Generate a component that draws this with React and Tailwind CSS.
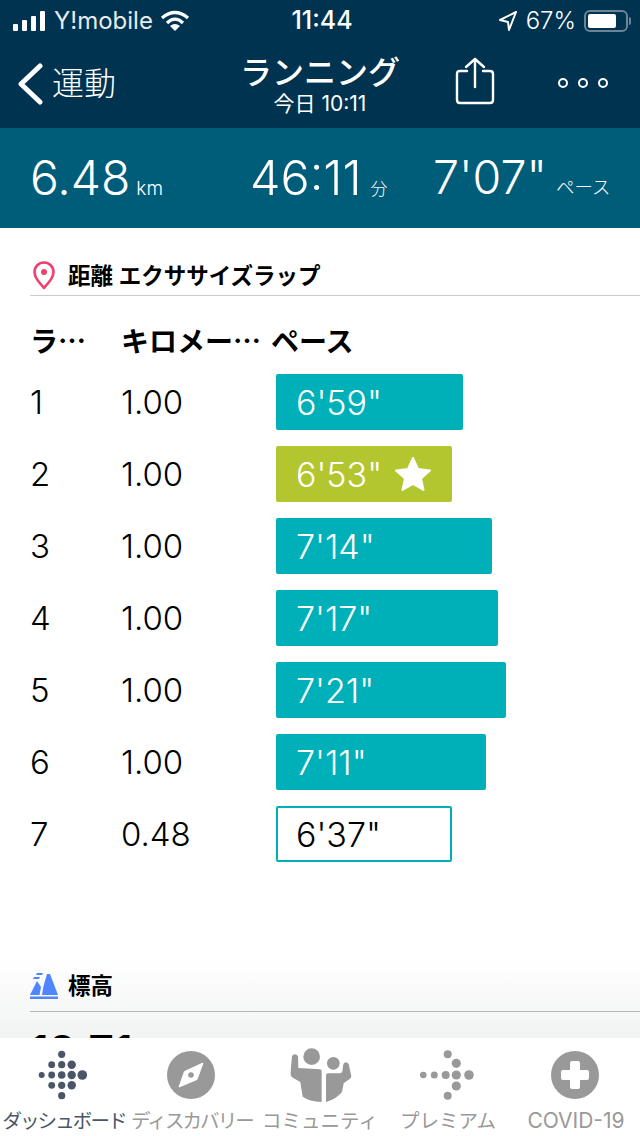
const laps = [
  { lap: '1', km: '1.00', pace: `6'59"`, bar: 'w-[187px] bg-[#00b0b9] text-white pl-[20px]' },
  { lap: '2', km: '1.00', pace: `6'53"`, bar: 'w-[176px] bg-[#b4c62f] text-white pl-[20px]', best: true },
  { lap: '3', km: '1.00', pace: `7'14"`, bar: 'w-[216px] bg-[#00b0b9] text-white pl-[20px]' },
  { lap: '4', km: '1.00', pace: `7'17"`, bar: 'w-[222px] bg-[#00b0b9] text-white pl-[20px]' },
  { lap: '5', km: '1.00', pace: `7'21"`, bar: 'w-[230px] bg-[#00b0b9] text-white pl-[20px]' },
  { lap: '6', km: '1.00', pace: `7'11"`, bar: 'w-[210px] bg-[#00b0b9] text-white pl-[20px]' },
  { lap: '7', km: '0.48', pace: `6'37"`, bar: 'w-[176px] border-2 border-[#00b0b9] text-black pl-[18px]' },
];

function Dots({ dots, fill }) {
  return (
    <svg width="60" height="56" viewBox="0 0 60 56" fill={fill}>
      {dots.map(([x, y, r]) => (
        <circle key={`${x}-${y}`} cx={x} cy={y} r={r} />
      ))}
    </svg>
  );
}

const dashDots = [
  [27.7, 7.3, 3.6], [17.7, 17.7, 3.4], [27.7, 17.7, 3.6], [37.7, 17.7, 4.2],
  [7.7, 28, 3], [17.7, 28, 3.4], [27.7, 28, 3.8], [37.7, 28, 4.2], [48.3, 28, 4.8],
  [17.7, 38.3, 3.4], [27.7, 38.3, 3.6], [37.7, 38.3, 4.2], [27.7, 48.7, 3.6],
];
const premiumDots = [
  [29.7, 7.3, 4], [38.3, 16.3, 4.6], [5.3, 28, 3.3], [16.3, 28, 3.5], [27.7, 28, 4], [38.3, 28, 4.6], [51, 28, 4.8],
  [38.3, 39, 4.6], [29.7, 48.7, 4],
];

function CompassIcon() {
  return (
    <svg className="-ml-[2px]" width="48" height="48" viewBox="0 0 48 48">
      <circle cx="24" cy="24" r="24" fill="#999" />
      <path d="M36 12 L17.5 20.5 L12 36 L30 28.5 Z" fill="#fff" stroke="#fff" strokeWidth="1" strokeLinejoin="round" />
      <circle cx="24" cy="24" r="2.8" fill="#999" />
    </svg>
  );
}

function CovidIcon() {
  return (
    <svg className="-ml-[2px]" width="48" height="48" viewBox="0 0 48 48">
      <circle cx="24" cy="24" r="24" fill="#999" />
      <path d="M19 12 Q19 10 21 10 H27 Q29 10 29 12 V19 H36 Q38 19 38 21 V27 Q38 29 36 29 H29 V36 Q29 38 27 38 H21 Q19 38 19 36 V29 H12 Q10 29 10 27 V21 Q10 19 12 19 H19 Z" fill="#fff" />
    </svg>
  );
}

function CommunityIcon() {
  return (
    <svg width="100" height="70" viewBox="0 0 300 210" fill="#999">
      <circle cx="125" cy="50" r="25" />
      <circle cx="190" cy="70" r="19" />
      <path d="M66 48 Q74 38 84 48 L85 84 L150 88 Q155 88 155 94 V186 Q118 184 98 170 L91 126 L66 112 Q60 106 62 96 Z" />
      <path d="M168 186 V106 Q168 100 174 100 H210 Q216 100 217 94 L220 72 Q228 62 236 72 L244 108 Q244 114 238 118 L221 130 L216 156 Q198 178 168 186 Z" />
    </svg>
  );
}

function TabItem({ icon, label, active, textClass }) {
  return (
    <div className="w-32 flex flex-col items-center">
      <div className="h-[62px] flex items-center justify-center">{icon}</div>
      <div className={`leading-6 mt-[3px] whitespace-nowrap ${textClass} ${active ? 'text-[#4a5568]' : 'text-[#999999]'}`}>{label}</div>
    </div>
  );
}

export default function App() {
  return (
    <div
      className="w-[640px] h-[1136px] flex flex-col overflow-hidden bg-white"
      style={{ fontFamily: '"Inter", "Noto Sans CJK JP", sans-serif' }}
    >
      {/* nav */}
      <div className="h-32 shrink-0 bg-[#00334f] text-white flex flex-col">
        <div className="h-10 flex items-center px-[13px] pt-[2px]">
          <div className="flex-1 flex items-center gap-[8px]">
            <svg width="33" height="20" viewBox="0 0 33 20" fill="#fff">
              <rect x="0" y="13" width="5" height="7" rx="1" />
              <rect x="9" y="9" width="5" height="11" rx="1" />
              <rect x="18" y="5" width="5" height="15" rx="1" />
              <rect x="27" y="0" width="5" height="20" rx="1" />
            </svg>
            <span className="text-[24px] font-normal opacity-90">Y!mobile</span>
            <svg className="-ml-[1px]" width="30" height="22" viewBox="0 0 30 22" fill="none" stroke="#fff" strokeWidth="3.2">
              <path d="M2 8 Q15 -3 28 8" />
              <path d="M7 13 Q15 5 23 13" />
              <path d="M15 21 L10 16 Q15 12 20 16 Z" fill="#fff" stroke="none" />
            </svg>
          </div>
          <span className="text-[25px] font-medium">11:44</span>
          <div className="flex-1 flex items-center justify-end gap-[8px] -mr-[4px]">
            <svg width="20" height="22" viewBox="0 0 20 22" fill="none" stroke="#fff" strokeWidth="2" strokeLinejoin="round">
              <path d="M18 2 L2 10 L10 12 L11 20 Z" />
            </svg>
            <span className="text-[24px] font-light">67%</span>
            <div className="flex items-center">
              <div className="w-[44px] h-[22px] rounded-[6px] border-2 border-[#6d8494] p-[2px]">
                <div className="w-[28px] h-[14px] rounded-[2px] bg-white" />
              </div>
              <div className="w-[2px] h-2 bg-[#6d8494] ml-[1px] rounded-r" />
            </div>
          </div>
        </div>
        <div className="flex-1 flex items-center relative">
          <div className="w-[240px] flex items-center pl-[17px]">
            <svg width="26" height="42" viewBox="0 0 26 42" fill="none" stroke="#fff" strokeWidth="5" strokeLinecap="round" strokeLinejoin="round">
              <path d="M23 3 L4 21 L23 39" />
            </svg>
            <span className="text-[32px] font-light ml-[9px]">運動</span>
          </div>
          <div className="w-[160px] flex flex-col items-center mt-[2px]">
            <div className="text-[32px] leading-[38px] font-medium whitespace-nowrap">ランニング</div>
            <div className="text-[21px] leading-[24px] font-normal whitespace-nowrap">今日 10:11</div>
          </div>
          <svg className="ml-[55px] -mt-[6px]" width="40" height="48" viewBox="0 0 40 48" fill="none" stroke="#fff" strokeWidth="2.4" strokeLinecap="round" strokeLinejoin="round">
            <path d="M12 14 H5 Q2 14 2 17 V43 Q2 46 5 46 H35 Q38 46 38 43 V17 Q38 14 35 14 H28" />
            <path d="M20 30 V2 M11 10 L20 2 L29 10" />
          </svg>
          <div className="flex gap-[10px] ml-[63px] -mt-[2px]">
            <div className="w-[10px] h-[10px] rounded-full border-2 border-white" />
            <div className="w-[10px] h-[10px] rounded-full border-2 border-white" />
            <div className="w-[10px] h-[10px] rounded-full border-2 border-white" />
          </div>
        </div>
      </div>

      {/* summary */}
      <div className="h-[100px] shrink-0 bg-[#005d7a] text-white flex items-center font-light">
        <div className="w-[250px] pl-[30px] flex items-baseline">
          <span className="text-[48px]">6.48</span>
          <span className="text-[19px] ml-[6px]">km</span>
        </div>
        <div className="w-[183px] flex items-baseline">
          <span className="text-[48.5px]">46:11</span>
          <span className="text-[17px] ml-[9px]">分</span>
        </div>
        <div className="flex items-baseline">
          <span className="text-[46.5px]">7'07"</span>
          <span className="text-[18.5px] ml-[9px]">ペース</span>
        </div>
      </div>

      {/* content */}
      <main className="flex-1 overflow-hidden bg-[linear-gradient(to_bottom,#ffffff_90%,#f2f3f3_100%)] text-black">
        <div className="ml-[30px] mt-[33px] h-[35px] flex items-start gap-[10px] border-b border-[#cccccc]">
          <svg width="28" height="30" viewBox="0 0 28 30" fill="none" stroke="#f0406f" strokeWidth="2.6">
            <path d="M14 27 C8 20 4.5 16 4.5 11 A9.5 9.5 0 0 1 23.5 11 C23.5 16 20 20 14 27 Z" strokeLinejoin="round" />
            <circle cx="14" cy="11" r="3" fill="#f0406f" stroke="none" />
          </svg>
          <span className="text-[22.5px] leading-[30px] font-semibold whitespace-nowrap">距離 エクササイズラップ</span>
        </div>

        <div
          className="flex items-center h-8 mt-[28px] pl-[30px] text-[28px] font-semibold"
          style={{ fontFamily: '"Noto Sans CJK JP", sans-serif' }}
        >
          <span className="w-[91px]">ラ…</span>
          <span className="w-[150px] whitespace-nowrap">キロメー…</span>
          <span>ペース</span>
        </div>

        <div className="mt-[18px] flex flex-col gap-4">
          {laps.map((row) => (
            <div key={row.lap} className="flex items-center h-14 text-[33px] font-light">
              <span className="w-[121px] pl-[30px] pt-[2px] shrink-0">{row.lap}</span>
              <span className="w-[155px] pt-[2px] shrink-0">{row.km}</span>
              <div className={`${row.bar} h-14 rounded-[2px] flex items-center gap-[12px] text-[34px]`}>
                <span>{row.pace}</span>
                {row.best && (
                  <svg width="38" height="36" viewBox="0 0 38 36" fill="#fff" stroke="#fff" strokeWidth="2" strokeLinejoin="round">
                    <path d="M19 2 L24 13 L36 14.5 L27 22.5 L29.5 34 L19 28 L8.5 34 L11 22.5 L2 14.5 L14 13 Z" />
                  </svg>
                )}
              </div>
            </div>
          ))}
        </div>

        <div className="ml-[30px] mt-[105px] h-[45px] flex items-start gap-[10px] border-b border-[#b5b5b5]">
          <svg className="mt-[6px]" width="28" height="26" viewBox="0 0 28 26" fill="#4f86ff">
            <path d="M0 22 L7 8 L11 14 L9.5 22 Z" />
            <path d="M12 22 L13.5 13 L17 1 H20 L28 22 Z" />
            <path d="M7 0 H13 L12 2 H6 Z M4 4 H10 L9 6 H3 Z" />
            <rect x="0" y="23.5" width="28" height="2.5" />
          </svg>
          <span className="text-[22.5px] leading-[38px] font-semibold">標高</span>
        </div>
        <div className="ml-[30px] mt-[13px] text-[44px] leading-[52px] font-semibold">19.71</div>
      </main>

      {/* tabs */}
      <div className="h-[98px] shrink-0 bg-white flex pt-[6px] justify-center">
        <TabItem active label="ダッシュボード" textClass="text-[19.5px] tracking-[-1.9px]" icon={<Dots dots={dashDots} fill="#4a5568" />} />
        <TabItem label="ディスカバリー" textClass="text-[19.5px] tracking-[-1.9px]" icon={<CompassIcon />} />
        <TabItem label="コミュニティ" textClass="text-[19.5px]" icon={<CommunityIcon />} />
        <TabItem label="プレミアム" textClass="text-[19.5px]" icon={<Dots dots={premiumDots} fill="#999" />} />
        <TabItem label="COVID-19" textClass="text-[21px]" icon={<CovidIcon />} />
      </div>
    </div>
  );
}
